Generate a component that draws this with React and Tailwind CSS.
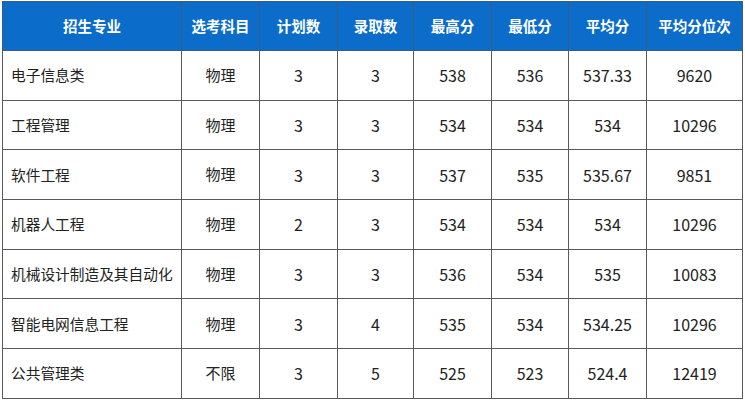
import React from "react";

const headers = ["招生专业", "选考科目", "计划数", "录取数", "最高分", "最低分", "平均分", "平均分位次"];
const widths = ["w-[179px]", "w-[78px]", "w-[78px]", "w-[76px]", "w-[78px]", "w-[77px]", "w-[78px]", "w-[96px]"];
const rows = [
  ["电子信息类", "物理", "3", "3", "538", "536", "537.33", "9620"],
  ["工程管理", "物理", "3", "3", "534", "534", "534", "10296"],
  ["软件工程", "物理", "3", "3", "537", "535", "535.67", "9851"],
  ["机器人工程", "物理", "2", "3", "534", "534", "534", "10296"],
  ["机械设计制造及其自动化", "物理", "3", "3", "536", "534", "535", "10083"],
  ["智能电网信息工程", "物理", "3", "4", "535", "534", "534.25", "10296"],
  ["公共管理类", "不限", "3", "5", "525", "523", "524.4", "12419"],
];

export default function App() {
  return (
    <div className="w-[745px] h-[400px] bg-white overflow-hidden pl-[2px] pt-[1px]" style={{ fontFamily: '"Noto Sans CJK SC", "Noto Sans", sans-serif' }}>
      <table className="border-collapse table-fixed w-[741px]">
        <thead>
          <tr className="h-[49px] bg-[#0b6cc9]">
            {headers.map((h, i) => (
              <th key={i} className={`${widths[i]} border border-[#3d5a80] text-white font-bold text-[14.5px] text-center p-0`}>{h}</th>
            ))}
          </tr>
        </thead>
        <tbody>
          {rows.map((r, ri) => (
            <tr key={ri} className="h-[49.7px]">
              {r.map((c, ci) => (
                <td key={ci} className={`border border-[#5a5a5a] text-[#222] p-0 ${ci === 0 ? "text-left pl-[8px] whitespace-nowrap text-[14.7px]" : ci === 1 ? "text-center text-[15px]" : "text-center text-[16px]"}`}>{c}</td>
              ))}
            </tr>
          ))}
        </tbody>
      </table>
    </div>
  );
}
